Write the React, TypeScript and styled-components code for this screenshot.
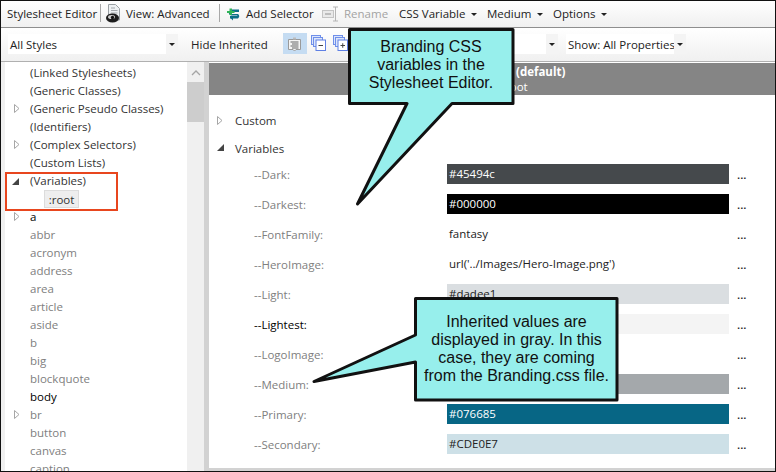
import React from 'react';
import styled, { createGlobalStyle } from 'styled-components';

const UI_FONT = '"Open Sans", "Noto Sans", sans-serif';

const treeItems = [
  { name: '(Linked Stylesheets)', tone: 'group' },
  { name: '(Generic Classes)', tone: 'group' },
  { name: '(Generic Pseudo Classes)', tone: 'group', arrow: 'closed' },
  { name: '(Identifiers)', tone: 'group' },
  { name: '(Complex Selectors)', tone: 'group', arrow: 'closed' },
  { name: '(Custom Lists)', tone: 'group' },
  { name: '(Variables)', tone: 'group', arrow: 'open' },
  { name: ':root', tone: 'selected' },
  { name: 'a', tone: 'own', arrow: 'closed' },
  { name: 'abbr' },
  { name: 'acronym' },
  { name: 'address' },
  { name: 'area' },
  { name: 'article' },
  { name: 'aside' },
  { name: 'b' },
  { name: 'big' },
  { name: 'blockquote' },
  { name: 'body', tone: 'own' },
  { name: 'br', arrow: 'closed' },
  { name: 'button' },
  { name: 'canvas' },
  { name: 'caption' },
];

const variables = [
  { name: '--Dark:', value: '#45494c', bg: '#45494c', fg: '#fff' },
  { name: '--Darkest:', value: '#000000', bg: '#000', fg: '#fff' },
  { name: '--FontFamily:', value: 'fantasy' },
  { name: '--HeroImage:', value: "url('../Images/Hero-Image.png')" },
  { name: '--Light:', value: '#dadee1', bg: '#dadee1' },
  { name: '--Lightest:', value: '', bg: '#f4f4f4', own: true },
  { name: '--LogoImage:', value: '' },
  { name: '--Medium:', value: '', bg: '#a4a8ab' },
  { name: '--Primary:', value: '#076685', bg: '#076685', fg: '#fff' },
  { name: '--Secondary:', value: '#CDE0E7', bg: '#cde0e7' },
];

const Arrow = ({ open }: { open?: boolean }) =>
  open ? (
    <svg width="7" height="7" viewBox="0 0 7 7">
      <path d="M0 7 L7 7 L7 0 Z" fill="#444" />
    </svg>
  ) : (
    <svg width="6" height="9" viewBox="0 0 6 9">
      <path d="M.5 .5 L5 4.5 L.5 8.500 Z" fill="#fff" stroke="#a6a6a6" />
    </svg>
  );

const DropCaret = () => (
  <svg width="6" height="3" viewBox="0 0 6 3">
    <path d="M0 0 H6 L3 3 Z" fill="#222" />
  </svg>
);

const ViewIcon = () => (
  <svg width="15" height="19" viewBox="0 0 15 19">
    <path d="M2.500 .5 H9.500 L13.500 4.500 V16 H2.500 Z" fill="#eef1f3" stroke="#9aa0a4" />
    <path d="M5 4 H9 M5 6.500 H11.500 M5 9 H11.500" stroke="#a3a8ac" />
    <ellipse cx="6.500" cy="14" rx="6.500" ry="4.500" fill="#1c1c1c" />
    <ellipse cx="5.500" cy="13" rx="3.500" ry="2" fill="#cfcfcf" />
    <circle cx="6.500" cy="13.500" r="1.700" fill="#111" />
  </svg>
);

const AddSelectorIcon = () => (
  <svg width="14" height="13" viewBox="0 0 14 13">
    <path d="M5 1.500 H12 V4 H5 Q3.500 5 5 6 H11 Q13.500 8 11 10.500 H3 V8 H10 Q11 7.500 10 7.500 H4 Q1 6 2 3.500 Z" fill="#0b6f88" />
    <path d="M0 3 H2.500 V.5 H5 V3 H7.500 V5 H5 V7 H2.500 V5 H0 Z" fill="#2fb457" />
    <path d="M6 12.500 L3 9.500 L6 8 Z" fill="#0b6f88" />
  </svg>
);

const RenameIcon = () => (
  <svg width="17" height="16" viewBox="0 0 17 16">
    <rect x=".5" y="4.500" width="11" height="7" fill="#e9e9e9" stroke="#c4c4c4" />
    <path d="M3 8 H9" stroke="#bdbdbd" strokeWidth="2" />
    <path d="M11 1 H16 M13.500 1 V15 M11 15 H16" stroke="#b5b5b5" fill="none" />
  </svg>
);

const ListIcon = () => (
  <svg width="15" height="15" viewBox="0 0 15 15">
    <path d="M1.500 2.500 H13.500 V12.500 H9 L7.500 14 L6 12.500 H1.500 Z" fill="#f4f4f4" stroke="#9a9a9a" />
    <path d="M6 .5 H9 V2.500 H6 Z" fill="#bbb" />
    <path d="M3.500 5 H11.500 M5 7 H11.500 M3.500 9 H11.500 M5 11 H11.500" stroke="#666" />
  </svg>
);

const StackIcon = ({ plus }: { plus?: boolean }) => (
  <svg width="15" height="16" viewBox="0 0 15 16">
    <rect x=".5" y=".5" width="9" height="9" fill="#dce6fb" stroke="#6f8fea" />
    <rect x="2.500" y="2.500" width="9" height="9" fill="#dce6fb" stroke="#6f8fea" />
    <rect x="5" y="5" width="9.500" height="10.500" fill="#fff" stroke="#5f80e4" />
    <path d={plus ? 'M7.500 10.500 H12 M9.750 8.250 V12.750' : 'M7.500 10.500 H12'} stroke="#444" />
  </svg>
);

const App = () => (
  <Page>
    <GlobalStyle />
    <TopBar>
      <BarText $left={7}>Stylesheet Editor</BarText>
      <BarDivider $left={100} />
      <BarIcon $left={106} $top={4}><ViewIcon /></BarIcon>
      <BarText $left={126}>View: Advanced</BarText>
      <BarDivider $left={219} />
      <BarIcon $left={227} $top={8}><AddSelectorIcon /></BarIcon>
      <BarText $left={246}>Add Selector</BarText>
      <BarIcon $left={322} $top={6}><RenameIcon /></BarIcon>
      <BarText $left={344} $muted>Rename</BarText>
      <BarText $left={399}>CSS Variable</BarText>
      <BarIcon $left={471} $top={13}><DropCaret /></BarIcon>
      <BarIcon $left={537} $top={13}><DropCaret /></BarIcon>
      <BarText $left={487}>Medium</BarText>
      <BarText $left={553}>Options</BarText>
      <BarIcon $left={601} $top={13}><DropCaret /></BarIcon>
    </TopBar>
    <FilterBar>
      <Select $left={8} $width={170}>
        All Styles
        <SelectCaret><DropCaret /></SelectCaret>
      </Select>
      <FilterText>Hide Inherited</FilterText>
      <ToggleButton />
      <ToggleGlyph $left={287} $top={37}><ListIcon /></ToggleGlyph>
      <ToggleGlyph $left={311} $top={35}><StackIcon /></ToggleGlyph>
      <ToggleGlyph $left={333} $top={35}><StackIcon plus /></ToggleGlyph>
      <Select $left={500} $width={58}>
        <SelectCaret><DropCaret /></SelectCaret>
      </Select>
      <Select $left={566} $width={120}>
        Show: All Properties
        <SelectCaret><DropCaret /></SelectCaret>
      </Select>
    </FilterBar>
    <LeftStrip />
    <TreePanel>
      {treeItems.map((item) => (
        <TreeRow key={item.name}>
          {item.arrow && (
            <TreeArrow $open={item.arrow === 'open'}>
              <Arrow open={item.arrow === 'open'} />
            </TreeArrow>
          )}
          {item.tone === 'selected' ? (
            <SelectedName>{item.name}</SelectedName>
          ) : (
            <TreeName $tone={item.tone}>{item.name}</TreeName>
          )}
        </TreeRow>
      ))}
    </TreePanel>
    <RedFrame />
    <ScrollTrack>
      <svg width="10" height="6" viewBox="0 0 10 6">
        <path d="M1 5 L5 1 L9 5" fill="none" stroke="#a5a5a5" strokeWidth="1.300" />
      </svg>
      <ScrollThumb />
    </ScrollTrack>
    <Splitter />
    <EditorPanel>
      <HeaderBand>
        <HeaderTitle>(default)</HeaderTitle>
        <HeaderSub>:root</HeaderSub>
      </HeaderBand>
      <SectionRow $top={50}>
        <SectionArrow><Arrow /></SectionArrow>
        Custom
      </SectionRow>
      <SectionRow $top={78}>
        <SectionArrow><Arrow open /></SectionArrow>
        Variables
      </SectionRow>
      <VariableList>
        {variables.map((v) => (
          <VariableRow key={v.name}>
            <VariableName $own={v.own}>{v.name}</VariableName>
            <VariableValue $bg={v.bg} $fg={v.fg}>{v.value}</VariableValue>
            <MoreDots>...</MoreDots>
          </VariableRow>
        ))}
      </VariableList>
    </EditorPanel>
    <BottomStrip />

    <CalloutShape width="776" height="472" viewBox="0 0 776 472">
      <path
        d="M349.500 29.500 H513 V103.500 H452 L357.500 204 L407 103.500 H349.500 Z"
        fill="#97efec"
        stroke="#111"
        strokeWidth="3"
        strokeLinejoin="round"
      />
      <path
        d="M415.500 298.500 H617 V400 H415.500 V362 L314 381.500 L415.500 335 Z"
        fill="#97efec"
        stroke="#111"
        strokeWidth="3"
        strokeLinejoin="round"
      />
    </CalloutShape>
    <CalloutText $left={350} $top={38} $width={162}>
      Branding CSS
      <br />
      variables in the
      <br />
      Stylesheet Editor.
    </CalloutText>
    <CalloutText $left={417} $top={313} $width={199}>
      Inherited values are
      <br />
      displayed in gray. In this
      <br />
      case, they are coming
      <br />
      from the Branding.css file.
    </CalloutText>
    <WindowEdge />
  </Page>
);

const GlobalStyle = createGlobalStyle`
  html, body {
    margin: 0;
    padding: 0;
    background: #fff;
  }
`;

const Page = styled.div`
  position: relative;
  width: 776px;
  height: 472px;
  overflow: hidden;
  background: #fff;
  font-family: ${UI_FONT};
  font-size: 11.5px;
  color: #222;
  box-sizing: border-box;
`;

const WindowEdge = styled.div`
  position: absolute;
  inset: 0;
  border: 1px solid #111;
  pointer-events: none;
`;

const TopBar = styled.div`
  position: absolute;
  left: 0;
  top: 0;
  width: 776px;
  height: 27px;
  background: linear-gradient(#ffffff, #f0f0f0);
  border-bottom: 1px solid #8e8e8e;
`;

const BarText = styled.span<{ $left: number; $muted?: boolean }>`
  position: absolute;
  left: ${({ $left }) => $left}px;
  top: 6px;
  line-height: 16px;
  white-space: nowrap;
  color: ${({ $muted }) => ($muted ? '#a3a3a3' : '#222')};
`;

const BarDivider = styled.i`
  position: absolute;
  left: ${({ $left }: { $left: number }) => $left}px;
  top: 4px;
  width: 1px;
  height: 18px;
  background: #a8a8a8;
`;

const BarIcon = styled.span<{ $left: number; $top: number }>`
  position: absolute;
  left: ${({ $left }) => $left}px;
  top: ${({ $top }) => $top}px;
  display: flex;
`;

const FilterBar = styled.div`
  position: absolute;
  left: 0;
  top: 28px;
  width: 776px;
  height: 33px;
  background: linear-gradient(#ffffff, #f0f0f0);
  border-bottom: 1px solid #b0b0b0;
`;

const Select = styled.div<{ $left: number; $width: number }>`
  position: absolute;
  left: ${({ $left }) => $left}px;
  top: 6px;
  width: ${({ $width }) => $width}px;
  height: 20px;
  padding-left: 2px;
  box-sizing: border-box;
  background: #fff;
  line-height: 21px;
  white-space: nowrap;
`;

const SelectCaret = styled.span`
  position: absolute;
  right: 0;
  top: 0;
  width: 12px;
  height: 20px;
  background: #f4f4f4;
  display: flex;
  align-items: center;
  justify-content: center;
`;

const FilterText = styled.span`
  position: absolute;
  left: 191px;
  top: 9px;
  line-height: 16px;
`;

const ToggleButton = styled.span`
  position: absolute;
  left: 283px;
  top: 5px;
  width: 24px;
  height: 21px;
  background: #c5dcf2;
`;

const ToggleGlyph = styled.span<{ $left: number; $top: number }>`
  position: absolute;
  left: ${({ $left }) => $left}px;
  top: ${({ $top }) => $top - 28}px;
  display: flex;
`;

const LeftStrip = styled.div`
  position: absolute;
  left: 0;
  top: 62px;
  width: 5px;
  height: 410px;
  background: #f0f0f0;
`;

const TreePanel = styled.div`
  position: absolute;
  left: 5px;
  top: 64px;
  width: 182px;
  height: 407px;
  overflow: hidden;
  background: #fff;
`;

const TreeRow = styled.div`
  position: relative;
  height: 18px;
  line-height: 18px;
  padding-left: 25px;
  white-space: nowrap;
`;

const TreeName = styled.span<{ $tone?: string }>`
  color: ${({ $tone }) =>
    $tone === 'group' ? '#333' : $tone === 'own' ? '#000' : '#808080'};
`;

const SelectedName = styled.span`
  display: inline-block;
  margin-left: 14px;
  width: 35px;
  height: 18px;
  line-height: 17px;
  text-align: center;
  box-sizing: border-box;
  background: #eeeeee;
  border: 1px solid #dcdcdc;
  color: #333;
`;

const TreeArrow = styled.span<{ $open: boolean }>`
  position: absolute;
  left: ${({ $open }) => ($open ? 7 : 9)}px;
  top: ${({ $open }) => ($open ? 6 : 4)}px;
  display: flex;
`;

const RedFrame = styled.div`
  position: absolute;
  left: 5px;
  top: 172px;
  width: 113px;
  height: 39px;
  box-sizing: border-box;
  border: 2px solid #e8461e;
`;

const ScrollTrack = styled.div`
  position: absolute;
  left: 187px;
  top: 62px;
  width: 17px;
  height: 409px;
  background: #f0f0f0;
  display: flex;
  justify-content: center;
  padding-top: 8px;
  box-sizing: border-box;
`;

const ScrollThumb = styled.div`
  position: absolute;
  left: 0;
  top: 20px;
  width: 17px;
  height: 40px;
  background: #cdcdcd;
`;

const Splitter = styled.div`
  position: absolute;
  left: 204px;
  top: 62px;
  width: 5px;
  height: 409px;
  background: #d2d2d2;
`;

const EditorPanel = styled.div`
  position: absolute;
  left: 209px;
  top: 62px;
  width: 566px;
  height: 406px;
  background: #fff;
`;

const HeaderBand = styled.div`
  position: absolute;
  left: 0;
  top: 1px;
  width: 100%;
  height: 32px;
  background: #858585;
  color: #fff;
`;

const HeaderTitle = styled.span`
  position: absolute;
  left: 307px;
  top: 1px;
  font-weight: 700;
  line-height: 15px;
`;

const HeaderSub = styled.span`
  position: absolute;
  left: 293px;
  top: 16px;
  line-height: 15px;
`;

const SectionRow = styled.div<{ $top: number }>`
  position: absolute;
  left: 26px;
  top: ${({ $top }) => $top}px;
  line-height: 18px;
  color: #333;
`;

const SectionArrow = styled.span`
  position: absolute;
  left: -18px;
  top: 4px;
  display: flex;
`;

const VariableList = styled.div`
  position: absolute;
  left: 0;
  top: 97px;
  width: 100%;
`;

const VariableRow = styled.div`
  display: flex;
  align-items: center;
  height: 30px;
  padding-left: 45px;
`;

const VariableName = styled.span<{ $own?: boolean }>`
  width: 193px;
  color: ${({ $own }) => ($own ? '#000' : '#808080')};
`;

const VariableValue = styled.div<{ $bg?: string; $fg?: string }>`
  width: 282px;
  height: 20px;
  line-height: 20px;
  padding-left: 2px;
  box-sizing: border-box;
  white-space: nowrap;
  background: ${({ $bg }) => $bg || 'transparent'};
  color: ${({ $fg }) => $fg || '#222'};
`;

const MoreDots = styled.span`
  margin-left: 8px;
  color: #222;
  font-weight: 600;
`;

const BottomStrip = styled.div`
  position: absolute;
  left: 209px;
  top: 468px;
  width: 566px;
  height: 3px;
  background: #d2d2d2;
`;

const CalloutShape = styled.svg`
  position: absolute;
  left: 0;
  top: 0;
`;

const CalloutText = styled.div<{ $left: number; $top: number; $width: number }>`
  position: absolute;
  left: ${({ $left }) => $left}px;
  top: ${({ $top }) => $top}px;
  width: ${({ $width }) => $width}px;
  font-family: 'Liberation Sans', Arial, sans-serif;
  font-size: 16px;
  line-height: 18px;
  text-align: center;
  color: #111;
  white-space: nowrap;
`;

export default App;
